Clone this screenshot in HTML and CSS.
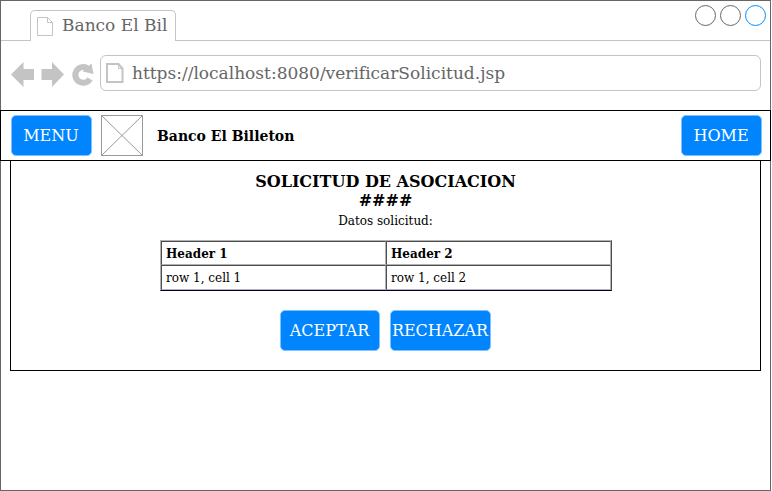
FILE: index.html
```html
<!DOCTYPE html>
<html lang="es">
<head>
<meta charset="utf-8">
<title>Banco El Billeton</title>
<link rel="stylesheet" href="styles.css">
</head>
<body>
<div class="window">
  <div class="tabstrip">
    <div class="tab">
      <svg class="tab-icon" width="16" height="19" viewBox="0 0 16 19"><path d="M.5.5h10l5 5v13H.5zM10.500.5v5h5"/></svg>
      <span class="tab-title">Banco El Bil</span>
    </div>
    <div class="controls"><i class="dot"></i><i class="dot"></i><i class="dot active"></i></div>
  </div>
  <div class="toolbar">
    <svg class="nav" width="84" height="26" viewBox="0 0 84 26">
      <path d="M0 12.500 12.500 0V7H23V18H12.500V25zM53 12.500 41 0V7H30.500V18H41V25z"/>
      <path class="reload" d="M77 6.600A7.900 7.900 0 1 0 79 17"/>
      <path d="M80.500 1.500 82.500 12 71.500 9.500z"/>
    </svg>
    <div class="address">
      <svg class="page-icon" width="18" height="20" viewBox="0 0 18 20"><path d="M1 1h11.500l4 4.500V19H1z"/><path class="fold" d="M12.500 1v4.500h4.500"/></svg>
      <span>https://localhost:8080/verificarSolicitud.jsp</span>
    </div>
  </div>
  <header class="banner">
    <button class="btn">MENU</button>
    <svg class="logo" width="42" height="41" viewBox="0 0 42 41"><path d="M.5.5h41v40H.5z"/><path d="M.5.5l41 40M41.500.5l-41 40"/></svg>
    <strong class="brand">Banco El Billeton</strong>
    <button class="btn home">HOME</button>
  </header>
  <main class="panel">
    <h1>SOLICITUD DE ASOCIACION<br>####</h1>
    <p>Datos solicitud:</p>
    <table>
      <tr><th>Header 1</th><th>Header 2</th></tr>
      <tr><td>row 1, cell 1</td><td>row 1, cell 2</td></tr>
    </table>
    <div class="actions"><button class="btn accept">ACEPTAR</button><button class="btn reject">RECHAZAR</button></div>
  </main>
</div>
</body>
</html>
```
FILE: styles.css
```css
* { box-sizing: border-box; }
body { margin: 0; background: #fff; font-family: "DejaVu Serif", serif; color: #000; }
.window { width: 771px; height: 491px; border: 1px solid #666; }
.tabstrip { height: 40px; display: flex; justify-content: space-between; align-items: flex-start; border-bottom: 1px solid #c4c4c4; padding: 0 4px 0 29px; }
.tab { width: 146px; height: 31px; margin-top: 9px; display: flex; align-items: center; background: #fff; border: 1px solid #c4c4c4; border-bottom: 0; border-radius: 5px 5px 0 0; padding-left: 6px; color: #666; font-size: 17px; white-space: nowrap; }
.tab-title { padding-bottom: 2px; }
.tab-icon { margin-right: 9px; fill: none; stroke: #c4c4c4; }
.controls { display: flex; gap: 4px; margin-top: 4px; }
.dot { width: 21px; height: 21px; border: 1px solid #666; border-radius: 50%; }
.dot.active { border-color: #008cff; }
.toolbar { height: 69px; display: flex; align-items: flex-start; padding: 14px 9px 0 10px; }
.nav { margin: 7px 5px 0 0; fill: #c4c4c4; }
.nav .reload { fill: none; stroke: #c4c4c4; stroke-width: 6; }
.address { flex: 1; height: 36px; display: flex; align-items: center; border: 1px solid #c4c4c4; border-radius: 6px; padding-left: 5px; color: #666; font-size: 17px; }
.page-icon { margin-right: 8px; fill: none; stroke: #c4c4c4; stroke-width: 2; }
.page-icon .fold { stroke-width: 1; }
.banner { height: 51px; margin: 0 -1px; display: flex; align-items: center; border: 1px solid #000; padding: 0 8px 0 10px; }
.btn { width: 81px; height: 41px; padding: 0 1px 0 0; border: 1px solid #80c2ff; border-radius: 5px; background: #0085ff; color: #fff; font: 16px "DejaVu Serif", serif; }
.logo { margin: 0 14px 0 9px; fill: none; stroke: #999; }
.brand { font-size: 14px; }
.home { margin-left: auto; }
.panel { width: 751px; height: 211px; margin: -1px 0 0 9px; border: 1px solid #000; padding-top: 11px; text-align: center; }
h1 { margin: 0; font-size: 16px; line-height: 19px; }
p { margin: 4px 0 0; font-size: 12px; line-height: 14px; }
table { width: 452px; height: 51px; margin: 12px 0 0 149px; border-spacing: 0; border: 1px solid; border-color: #b2b2b2 #4d4d4d #000033 #b2b2b2; table-layout: fixed; font-size: 12px; line-height: 14px; }
th, td { padding: 0 4px; text-align: left; border: 1px solid; border-color: #4d4d4d #b2b2b2 #b2b2b2 #4d4d4d; }
th { height: 24px; padding-top: 2px; }
td { height: 25px; }
.actions { display: flex; justify-content: center; gap: 10px; margin-top: 19px; }
.accept { width: 100px; }
.reject { width: 101px; }
```
